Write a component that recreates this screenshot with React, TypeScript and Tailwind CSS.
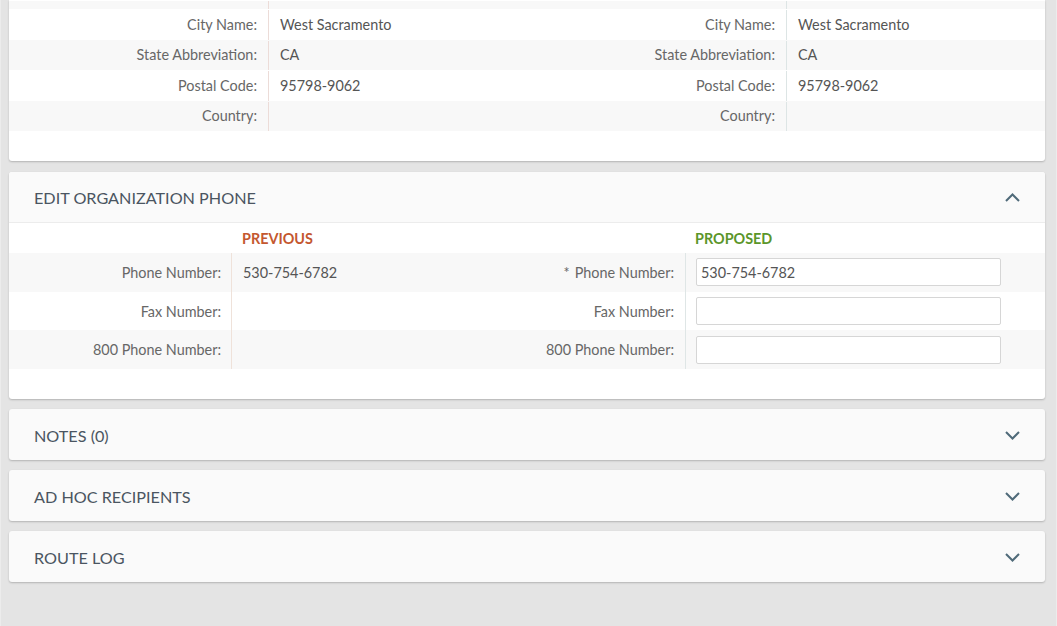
import React from 'react';

const addressRows = [
    { label: 'City Name:', value: 'West Sacramento' },
    { label: 'State Abbreviation:', value: 'CA' },
    { label: 'Postal Code:', value: '95798-9062' },
    { label: 'Country:', value: '' },
];

const phoneRows = [
    { label: 'Phone Number:', prev: '530-754-6782', proposed: '530-754-6782', required: true },
    { label: 'Fax Number:', prev: '', proposed: '', required: false },
    { label: '800 Phone Number:', prev: '', proposed: '', required: false },
];

const Chevron: React.FC<{ up?: boolean }> = ({ up }) => (
    <svg width="15" height="9" viewBox="0 0 15 9" className="shrink-0">
        <polyline
            points={up ? '1,8 7.5,1.5 14,8' : '1,1 7.5,7.5 14,1'}
            fill="none"
            stroke="#4f6a79"
            strokeWidth="2"
        />
    </svg>
);

const CollapsedPanel: React.FC<{ title: string }> = ({ title }) => (
    <div className="h-[51px] bg-[#fafafa] rounded-[3px] shadow-[0_1px_2px_rgba(0,0,0,0.22)] flex items-center justify-between pl-[25px] pr-[25px] mb-[10px]">
        <span className="text-[16.2px] text-[#4a5561] pt-[3px]">{title}</span>
        <span className="pt-[2px]"><Chevron /></span>
    </div>
);

export default function App() {
    return (
        <div className="min-h-[626px] bg-[#e4e4e4] pl-[8px] pr-[11px] font-['Lato','Noto_Sans',sans-serif] text-[14.4px] text-[#555] border-l border-l-[#ececec] border-r border-r-[#ececec]">
            {/* address card, scrolled past its top */}
            <div className="bg-white rounded-b-[3px] shadow-[0_1px_2px_rgba(0,0,0,0.22)] pb-[30px] mb-[11px]">
                <div className="grid grid-cols-4 h-[9px] bg-[#f8f8f8] border-t border-white">
                    <div />
                    <div className="border-l border-[#ecdcd8]" />
                    <div />
                    <div className="border-l border-[#dde5e5]" />
                </div>
                {addressRows.map((r, i) => (
                    <div key={r.label} className={`grid grid-cols-4 h-[30.5px] pt-[1px] ${i % 2 ? 'bg-[#f8f8f8]' : 'bg-white'}`}>
                        <div className="flex items-center justify-end pr-[11px] text-[#676767]">{r.label}</div>
                        <div className="flex items-center pl-[11px] border-l border-[#ecdcd8]">{r.value}</div>
                        <div className="flex items-center justify-end pr-[11px] text-[#676767]">{r.label}</div>
                        <div className="flex items-center pl-[11px] border-l border-[#dde5e5]">{r.value}</div>
                    </div>
                ))}
            </div>

            {/* phone card */}
            <div className="bg-white rounded-[3px] shadow-[0_1px_2px_rgba(0,0,0,0.22)] pb-[30px] mb-[10px]">
                <div className="h-[51px] bg-[#fafafa] rounded-t-[3px] border-b border-[#ececec] flex items-center justify-between pl-[25px] pr-[25px]">
                    <span className="text-[16.2px] text-[#4a5561] pt-[2px]">EDIT ORGANIZATION PHONE</span>
                    <Chevron up />
                </div>
                <div className="grid grid-cols-[222px_232px_222px_1fr] h-[30px] pt-[1px] items-center font-bold">
                    <div />
                    <div className="pl-[11px] text-[#c4572f]">PREVIOUS</div>
                    <div />
                    <div className="pl-[10px] text-[#5b962a]">PROPOSED</div>
                </div>
                {phoneRows.map((r, i) => (
                    <div key={r.label} className={`grid grid-cols-[222px_232px_222px_1fr] h-[38.7px] ${i % 2 ? 'bg-white' : 'bg-[#f8f8f8]'}`}>
                        <div className="flex items-center justify-end pr-[10px] pt-[1px] text-[#676767]">{r.label}</div>
                        <div className="flex items-center pl-[11px] pt-[1px] border-l border-[#efe2da]">{r.prev}</div>
                        <div className="flex items-center justify-end pr-[11px] pt-[1px] text-[#676767]">
                            {r.required && <span className="mr-[5px]">*</span>}
                            {r.label}
                        </div>
                        <div className="flex items-center pl-[10px] border-l border-[#dfe6e6]">
                            <input
                                defaultValue={r.proposed}
                                className="w-[305px] h-[28px] bg-white border border-[#d6d6d6] rounded-[2px] px-[4px] text-[14.4px] text-[#555] outline-none"
                            />
                        </div>
                    </div>
                ))}
            </div>

            <CollapsedPanel title="NOTES (0)" />
            <CollapsedPanel title="AD HOC RECIPIENTS" />
            <CollapsedPanel title="ROUTE LOG" />
        </div>
    );
}
